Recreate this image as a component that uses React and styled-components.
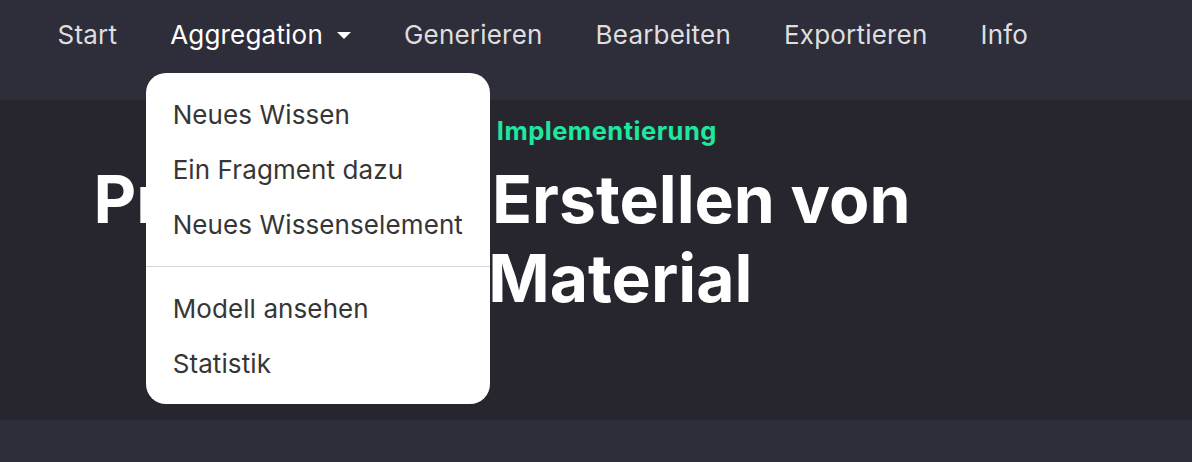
import React from "react";
import styled, { createGlobalStyle } from "styled-components";

const GlobalStyle = createGlobalStyle`
  * { box-sizing: border-box; }
  body {
    margin: 0;
    background: #2e2d3a;
    font-family: Inter, "Noto Sans", sans-serif;
  }
`;

const navItems = [
    { label: "Start" },
    { label: "Aggregation", active: true, toggle: true },
    { label: "Generieren" },
    { label: "Bearbeiten" },
    { label: "Exportieren" },
    { label: "Info" },
];

const menuGroups = [
    ["Neues Wissen", "Ein Fragment dazu", "Neues Wissenselement"],
    ["Modell ansehen", "Statistik"],
];

const App = () => {
    return (
        <>
            <GlobalStyle />
            <Page>
                <NavBar>
                    {navItems.map((item) => (
                        <NavItem key={item.label}>
                            <NavLink $active={item.active}>
                                {item.label}
                                {item.toggle && <Caret />}
                            </NavLink>
                            {item.toggle && (
                                <Dropdown>
                                    {menuGroups.map((group, i) => (
                                        <React.Fragment key={i}>
                                            {i > 0 && <Divider />}
                                            {group.map((entry) => (
                                                <DropdownItem key={entry}>{entry}</DropdownItem>
                                            ))}
                                        </React.Fragment>
                                    ))}
                                </Dropdown>
                            )}
                        </NavItem>
                    ))}
                </NavBar>
                <Hero>
                    <HeroInner>
                        <Eyebrow>Vom Design zur Implementierung</Eyebrow>
                        <Title>
                            Projekt zum Erstellen von
                            <br />
                            neuem Material
                        </Title>
                    </HeroInner>
                </Hero>
            </Page>
        </>
    );
};

const Page = styled.div`
  min-height: 462px;
  background: #2e2d3a;
`;

const NavBar = styled.nav`
  display: flex;
  align-items: flex-start;
  height: 100px;
  padding: 20px 0 0 31px;
  background: #2e2d3a;
  position: relative;
  z-index: 2;
`;

const NavItem = styled.div`
  position: relative;
`;

const NavLink = styled.a`
  display: flex;
  align-items: center;
  padding: 0 26.5px;
  font-size: 26px;
  letter-spacing: 0.2px;
  line-height: 30px;
  color: ${(p) => (p.$active ? "#ffffff" : "rgba(255, 255, 255, 0.85)")};
  cursor: pointer;
`;

const Caret = styled.span`
  display: inline-block;
  margin-left: 14px;
  border-top: 7px solid #ffffff;
  border-left: 7px solid transparent;
  border-right: 7px solid transparent;
`;

const Dropdown = styled.div`
  position: absolute;
  top: 53px;
  left: 2px;
  width: 344px;
  padding: 14px 0 13px;
  background: #ffffff;
  border-radius: 20px;
`;

const DropdownItem = styled.div`
  padding: 0 27px;
  font-size: 26px;
  letter-spacing: 0.1px;
  line-height: 55px;
  color: #363636;
  white-space: nowrap;
`;

const Divider = styled.hr`
  margin: 14px 0;
  border: 0;
  border-top: 1px solid #d6d6d6;
`;

const Hero = styled.header`
  height: 320px;
  padding: 16px 0 0 80px;
  background: #27262f;
`;

const HeroInner = styled.div`
  width: 844px;
  text-align: center;
`;

const Eyebrow = styled.div`
  font-size: 25.5px;
  font-weight: 700;
  letter-spacing: 0.5px;
  line-height: 30px;
  color: #1ee89e;
`;

const Title = styled.h1`
  margin: 14px 0 0;
  font-size: 66px;
  font-weight: 700;
  line-height: 79px;
  color: #ffffff;
`;

export default App;
